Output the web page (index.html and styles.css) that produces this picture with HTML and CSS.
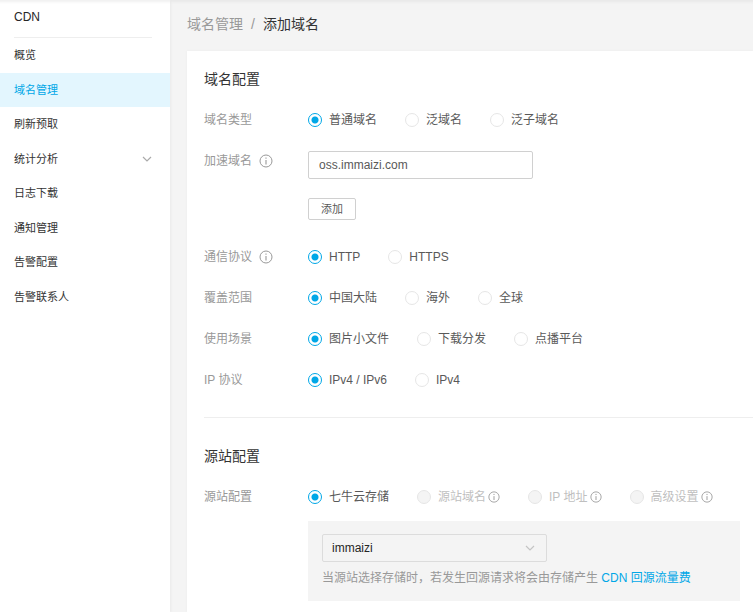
FILE: index.html
```html
<!DOCTYPE html>
<html lang="zh-CN">
<head>
<meta charset="utf-8">
<meta name="viewport" content="width=device-width, initial-scale=1">
<title>添加域名</title>
<link rel="stylesheet" href="styles.css">
</head>
<body>
<svg class="defs" aria-hidden="true">
  <symbol id="info" viewBox="0 0 14 14">
    <circle cx="7" cy="7" r="6" fill="none" stroke="currentColor"/>
    <path d="M7 3.4v1.3M7 6v4.5" fill="none" stroke="currentColor" stroke-width="1.1"/>
  </symbol>
  <symbol id="chevron" viewBox="0 0 10 10">
    <path d="M1 3l4 4 4-4" fill="none" stroke="currentColor" stroke-width="1.2"/>
  </symbol>
</svg>
<div class="app">
  <aside class="sidebar">
    <div class="product">CDN</div>
    <nav class="menu">
      <a href="#">概览</a>
      <a href="#" class="active">域名管理</a>
      <a href="#">刷新预取</a>
      <a href="#">统计分析<svg class="chevron"><use href="#chevron"/></svg></a>
      <a href="#">日志下载</a>
      <a href="#">通知管理</a>
      <a href="#">告警配置</a>
      <a href="#">告警联系人</a>
    </nav>
  </aside>
  <main class="main">
    <div class="breadcrumb"><a href="#">域名管理</a><span class="slash">/</span><span class="current">添加域名</span></div>
    <form class="card">
      <section class="section">
        <h2>域名配置</h2>
        <div class="row">
          <div class="label" id="l-type">域名类型</div>
          <div class="options" role="radiogroup" aria-labelledby="l-type">
            <label><input type="radio" name="type" checked>普通域名</label>
            <label><input type="radio" name="type">泛域名</label>
            <label><input type="radio" name="type">泛子域名</label>
          </div>
        </div>
        <div class="row row-domain">
          <label class="label" for="domain">加速域名<svg class="info"><use href="#info"/></svg></label>
          <div class="stack">
            <input class="text" id="domain" type="text" value="oss.immaizi.com">
            <button class="add" type="button">添加</button>
          </div>
        </div>
        <div class="row">
          <div class="label" id="l-proto">通信协议<svg class="info"><use href="#info"/></svg></div>
          <div class="options" role="radiogroup" aria-labelledby="l-proto">
            <label><input type="radio" name="proto" checked>HTTP</label>
            <label><input type="radio" name="proto">HTTPS</label>
          </div>
        </div>
        <div class="row">
          <div class="label" id="l-area">覆盖范围</div>
          <div class="options" role="radiogroup" aria-labelledby="l-area">
            <label><input type="radio" name="area" checked>中国大陆</label>
            <label><input type="radio" name="area">海外</label>
            <label><input type="radio" name="area">全球</label>
          </div>
        </div>
        <div class="row">
          <div class="label" id="l-scene">使用场景</div>
          <div class="options" role="radiogroup" aria-labelledby="l-scene">
            <label><input type="radio" name="scene" checked>图片小文件</label>
            <label><input type="radio" name="scene">下载分发</label>
            <label><input type="radio" name="scene">点播平台</label>
          </div>
        </div>
        <div class="row">
          <div class="label" id="l-ip">IP 协议</div>
          <div class="options" role="radiogroup" aria-labelledby="l-ip">
            <label><input type="radio" name="ip" checked>IPv4 / IPv6</label>
            <label><input type="radio" name="ip">IPv4</label>
          </div>
        </div>
      </section>
      <section class="section section-origin">
        <h2>源站配置</h2>
        <div class="row">
          <div class="label" id="l-origin">源站配置</div>
          <div class="stack stack-origin">
            <div class="options" role="radiogroup" aria-labelledby="l-origin">
              <label><input type="radio" name="origin" checked>七牛云存储</label>
              <label class="off"><input type="radio" name="origin" disabled>源站域名<svg class="info small"><use href="#info"/></svg></label>
              <label class="off"><input type="radio" name="origin" disabled>IP 地址<svg class="info small"><use href="#info"/></svg></label>
              <label class="off"><input type="radio" name="origin" disabled>高级设置<svg class="info small"><use href="#info"/></svg></label>
            </div>
            <div class="panel">
              <div class="select">
                <select aria-label="存储空间"><option>immaizi</option></select>
                <svg class="chevron"><use href="#chevron"/></svg>
              </div>
              <p>当源站选择存储时，若发生回源请求将会由存储产生 <a href="#">CDN 回源流量费</a></p>
            </div>
          </div>
        </div>
      </section>
    </form>
  </main>
</div>
</body>
</html>
```
FILE: styles.css
```css
* { box-sizing: border-box; }

body {
  margin: 0;
  background: #f4f4f4;
  color: #595959;
  font: 12px/20px "Liberation Sans", "Noto Sans CJK SC", sans-serif;
}

a { color: inherit; text-decoration: none; }

.defs { display: none; }

.app {
  display: flex;
  min-height: 100vh;
  box-shadow: inset 0 5px 3px -3px #e8e8e8;
}

/* Sidebar */
.sidebar {
  flex: 0 0 170px;
  background: #fff;
  box-shadow: 1px 0 2px #e9e9e9, inset 0 5px 3px -3px #f0f0f0;
}

.product {
  margin: 0 18px 0 14px;
  padding: 7px 0 10px;
  border-bottom: 1px solid #eee;
  color: #262626;
}

.menu {
  display: grid;
  grid-auto-rows: 1fr;
  height: 276px;
  font-size: 11px;
  color: #333;
}

.menu a {
  display: flex;
  align-items: center;
  justify-content: space-between;
  padding: 0 18px 0 14px;
}

.menu .active { background: #e3f6fe; color: #00a7e7; }

.chevron { width: 10px; height: 10px; color: #aaa; }

/* Content */
.main {
  flex: 1;
  min-width: 0;
  display: flex;
  flex-direction: column;
  padding-left: 17px;
}

.breadcrumb {
  padding: 14px 0 17px;
  font-size: 14px;
  color: #999;
}

.breadcrumb .slash { margin: 0 8px; }
.breadcrumb .current { color: #333; }

.card {
  flex: 1;
  padding: 18px 0 11px 17px;
  background: #fff;
  box-shadow: 0 0 2px #ececec;
}

h2 {
  margin: 0 0 21px;
  font-size: 14px;
  font-weight: 400;
  color: #333;
}

.row {
  display: grid;
  grid-template-columns: 104px 1fr;
  align-items: start;
  margin-bottom: 21px;
}

.row:last-child { margin-bottom: 0; }
.row-domain { margin-bottom: 27px; }

.label {
  display: flex;
  align-items: center;
  gap: 7px;
  color: #999;
}

.info { width: 14px; height: 14px; color: #999; }
.info.small { width: 12px; height: 12px; margin-left: -5px; }

.options { display: flex; gap: 28px; }

.options label {
  display: flex;
  align-items: center;
  gap: 7px;
  white-space: nowrap;
}

.options .off { color: #bfbfbf; }

input[type="radio"] {
  appearance: none;
  width: 14px;
  height: 14px;
  margin: 0;
  border: 1px solid #e6e6e6;
  border-radius: 50%;
  background: #fff;
}

input[type="radio"]:checked {
  border-color: #00a7e7;
  background: radial-gradient(circle, #00a7e7 3px, #fff 4px);
}

input[type="radio"]:disabled { background: #f4f4f4; }

.stack {
  display: flex;
  flex-direction: column;
  align-items: flex-start;
  gap: 19px;
}

.stack-origin { align-items: stretch; gap: 14px; padding-right: 13px; }

.text {
  width: 225px;
  height: 28px;
  padding: 0 10px;
  border: 1px solid #d0d0d0;
  border-radius: 2px;
  font: inherit;
  color: #595959;
}

.add {
  height: 22px;
  padding: 0 12px;
  border: 1px solid #d0d0d0;
  border-radius: 2px;
  background: #fff;
  font: inherit;
  font-size: 11px;
  color: #595959;
}

.section-origin {
  margin-top: 27px;
  padding-top: 28px;
  border-top: 1px solid #eee;
}

.panel { padding: 13px 14px; background: #f4f4f4; }

.select {
  display: grid;
  grid-template-columns: 1fr 22px;
  align-items: center;
  width: 225px;
}

.select select {
  grid-area: 1 / 1 / 2 / 3;
  appearance: none;
  height: 28px;
  padding: 0 9px;
  border: 1px solid #dcdcdc;
  border-radius: 2px;
  background: transparent;
  font: inherit;
  color: #262626;
}

.select .chevron { grid-area: 1 / 2; color: #c4c4c4; pointer-events: none; }

.panel p { margin: 6px 0 0; color: #999; }
.panel a { color: #00a7e7; }
```
